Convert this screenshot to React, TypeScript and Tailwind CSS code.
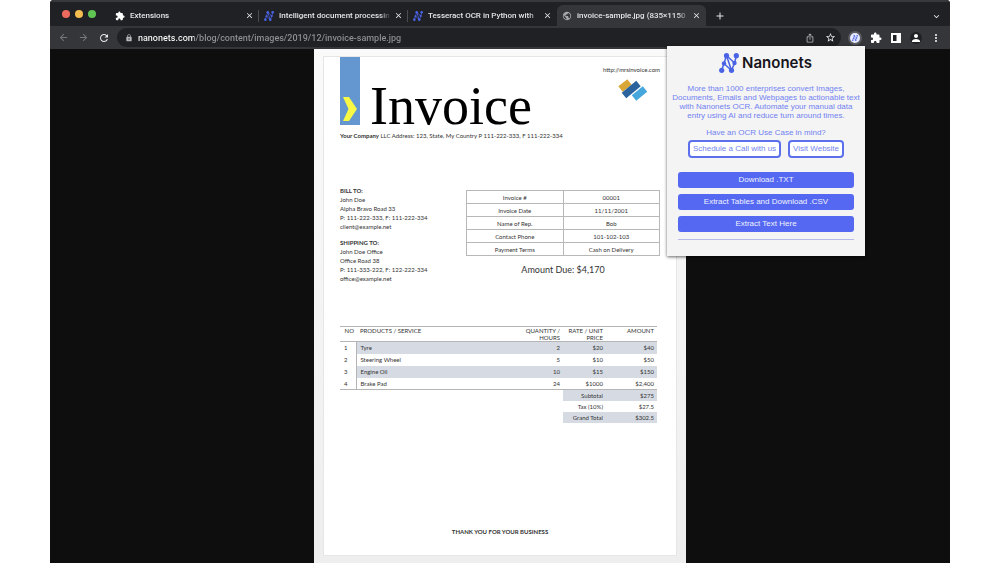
import React, { useState } from 'react';
import {
  MdAdd,
  MdArrowBack,
  MdArrowForward,
  MdClose,
  MdExpandMore,
  MdExtension,
  MdIosShare,
  MdLock,
  MdMoreVert,
  MdPerson,
  MdPublic,
  MdRefresh,
  MdStarBorder,
} from 'react-icons/md';

const NanonetsMark: React.FC<{ className?: string }> = ({ className }) => (
  <svg viewBox="0 0 20 20" className={className} aria-hidden="true">
    <g stroke="#4a63e6" strokeWidth="1.5" fill="none">
      <path d="M2.5 17.5 5 10.5 7.5 2.5 12.500 17.500 15.500 10 17.500 2.500" />
      <path d="M5 10.500 12.500 17.500M7.500 2.500 15.500 10" />
    </g>
    <g fill="#4a63e6">
      <circle cx="2.700" cy="17.300" r="2.600" />
      <circle cx="5" cy="10.500" r="2.200" />
      <circle cx="7.500" cy="2.700" r="2.600" />
      <circle cx="12.500" cy="17.300" r="2.600" />
      <circle cx="15.500" cy="10" r="2.200" />
      <circle cx="17.300" cy="2.700" r="2.600" />
    </g>
  </svg>
);

const tabs = [
  { title: 'Extensions', kind: 'extension' },
  { title: 'Intelligent document processin', kind: 'nanonets' },
  { title: 'Tesseract OCR in Python with', kind: 'nanonets' },
  { title: 'invoice-sample.jpg (835×1150', kind: 'image' },
];

const TabIcon: React.FC<{ kind: string }> = ({ kind }) => {
  if (kind === 'extension') return <MdExtension size={10} className="shrink-0 text-white" />;
  if (kind === 'image') return <MdPublic size={10} className="shrink-0 text-[#a5a7aa]" />;
  return <NanonetsMark className="size-[10px] shrink-0" />;
};

const TabStrip: React.FC<{ active: number; onSelect: (i: number) => void }> = ({ active, onSelect }) => (
  <div className="flex h-[26px] border-t-2 border-[#38393c] bg-[#202124] pl-3">
    <div className="flex w-12 shrink-0 items-center gap-[5px]">
      <span className="size-2 rounded-full bg-[#ec6a5e]" />
      <span className="size-2 rounded-full bg-[#f4bd4f]" />
      <span className="size-2 rounded-full bg-[#61c554]" />
    </div>
    <div className="flex min-w-0 pt-[3px]">
      {tabs.map((tab, i) => (
        <div
          key={tab.title}
          className={`flex w-[149px] min-w-0 items-center rounded-t-md px-[5px] ${
            i === active ? 'bg-[#35363a]' : ''
          }`}
        >
          <button onClick={() => onSelect(i)} className="flex min-w-0 flex-1 items-center gap-[5px]">
            <TabIcon kind={tab.kind} />
            <span className="min-w-0 flex-1 overflow-hidden mask-r-from-90% text-left font-['Roboto',sans-serif] text-[8px] leading-3 font-medium whitespace-nowrap text-[#e3e4e6]">
              {tab.title}
            </span>
          </button>
          <button aria-label={`Close ${tab.title}`} className="ml-[3px] text-[#e8eaed]">
            <MdClose size={9} />
          </button>
          {i < active - 1 && <span className="ml-1 -mr-[5px] h-3 w-px bg-[#4a4c50]" />}
        </div>
      ))}
    </div>
    <button aria-label="New tab" className="ml-2 pt-1 text-[#e8eaed]">
      <MdAdd size={12} />
    </button>
    <button aria-label="Search tabs" className="mr-2 ml-auto pt-1 text-[#e8eaed]">
      <MdExpandMore size={11} />
    </button>
  </div>
);

const Toolbar: React.FC = () => (
  <div className="flex h-[23px] items-center bg-[#35363a] px-2 text-[#e8eaed]">
    <div className="flex w-[59px] shrink-0 items-center gap-[9px]">
      <button aria-label="Back" className="text-[#75777b]">
        <MdArrowBack size={11} />
      </button>
      <button aria-label="Forward" className="text-[#75777b]">
        <MdArrowForward size={11} />
      </button>
      <button aria-label="Reload">
        <MdRefresh size={12} />
      </button>
    </div>
    <div className="flex h-[19px] min-w-0 flex-1 items-center rounded-full bg-[#202124] pr-[5px] pl-2">
      <MdLock size={8} className="mr-[5px] shrink-0 text-[#b5b7ba]" />
      <label htmlFor="address" className="sr-only">
        Address
      </label>
      <input
        id="address"
        type="text"
        defaultValue="nanonets.com/blog/content/images/2019/12/invoice-sample.jpg"
        className="min-w-0 flex-1 bg-[linear-gradient(90deg,#ffffff_56px,#8f9296_56px)] bg-clip-text font-['Roboto',sans-serif] text-[9px] leading-3 font-medium text-transparent outline-none"
      />
      <button aria-label="Share" className="mr-[10px] text-[#b5b7ba]">
        <MdIosShare size={10} />
      </button>
      <button aria-label="Bookmark">
        <MdStarBorder size={11} />
      </button>
    </div>
    <div className="ml-[7px] flex items-center gap-2">
      <button aria-label="Nanonets" className="flex size-[14px] items-center justify-center rounded-full bg-[#5a5b60]">
        <span className="flex size-[10px] items-center justify-center rounded-full bg-[#e8ebff]">
          <NanonetsMark className="size-[6px]" />
        </span>
      </button>
      <button aria-label="Extensions menu" className="text-white">
        <MdExtension size={12} />
      </button>
      <button aria-label="Side panel" className="px-px">
        <svg viewBox="0 0 10 10" className="size-[10px]" aria-hidden="true">
          <path d="M0 0h10v10H0z" fill="#fff" />
          <path d="M2 2h3.500v6H2z" fill="#202124" />
        </svg>
      </button>
      <button aria-label="Profile" className="rounded-full bg-[#202124] text-white">
        <MdPerson size={12} />
      </button>
      <button aria-label="More">
        <MdMoreVert size={12} />
      </button>
    </div>
  </div>
);

const outlineButton =
  'h-[18px] rounded-[4px] border-2 border-[#5b70ea] bg-white px-[3px] text-[8px] leading-[14px] whitespace-nowrap text-[#7484ee]';

const ExtensionPopup: React.FC = () => (
  <div className="absolute top-[46px] right-[85px] w-[198px] bg-[#f4f4f4] px-[11px] pt-[7px] pb-4 text-center font-['Liberation_Sans',sans-serif] text-[#7282f2] shadow-[0_1px_3px_rgba(0,0,0,0.6)]">
    <div className="flex h-5 items-center justify-center gap-[3px] pr-px">
      <NanonetsMark className="size-5" />
      <span className="font-['Inter',sans-serif] text-[15px] leading-5 font-semibold text-[#15151b]">Nanonets</span>
    </div>
    <p className="-mx-2 mt-[11px] text-[8px] leading-[9px]">
      More than 1000 enterprises convert Images,
      <br />
      Documents, Emails and Webpages to actionable text
      <br />
      with Nanonets OCR. Automate your manual data
      <br />
      entry using AI and reduce turn around times.
    </p>
    <p className="mt-2 text-[8px] leading-[9px]">Have an OCR Use Case in mind?</p>
    <div className="mt-[3px] flex justify-center gap-[7px]">
      <a href="#schedule" className={outlineButton}>
        Schedule a Call with us
      </a>
      <a href="#website" className={outlineButton}>
        Visit Website
      </a>
    </div>
    <div className="mt-[14px] flex flex-col gap-[6px]">
      {['Download .TXT', 'Extract Tables and Download .CSV', 'Extract Text Here'].map((label) => (
        <button key={label} className="h-4 rounded-[3px] bg-[#5468f2] text-[8px] leading-4 text-[#f0f2ff]">
          {label}
        </button>
      ))}
    </div>
    <hr className="mt-[7px] border-[#b4bbe8]" />
  </div>
);

const meta = [
  ['Invoice #', '00001'],
  ['Invoice Date', '11/11/2001'],
  ['Name of Rep.', 'Bob'],
  ['Contact Phone', '101-102-103'],
  ['Payment Terms', 'Cash on Delivery'],
];

const items = [
  ['1', 'Tyre', '2', '$20', '$40'],
  ['2', 'Steering Wheel', '5', '$10', '$50'],
  ['3', 'Engine Oil', '10', '$15', '$150'],
  ['4', 'Brake Pad', '24', '$1000', '$2,400'],
];

const totals = [
  ['Subtotal', '$275'],
  ['Tax (10%)', '$27.5'],
  ['Grand Total', '$302.5'],
];

const Invoice: React.FC = () => (
  <article className="flex flex-1 flex-col border border-[#e6e6e6] bg-white px-4 font-['Lato',sans-serif] text-[6px] leading-[9px] text-[#333333]">
    <header className="flex h-[68px]">
      <div className="flex w-5 shrink-0 items-end justify-center bg-[#6496cf] pb-1">
        <svg viewBox="0 0 14 24" className="h-6 w-[14px]" aria-hidden="true">
          <path d="M0 0h6l8 12-8 12H0l5.500-12z" fill="#f8f845" />
        </svg>
      </div>
      <h1 className="mt-[22px] ml-[10px] font-['Liberation_Serif',serif] text-[54px] leading-[54px] text-black">
        Invoice
      </h1>
      <div className="ml-auto flex flex-col items-end pt-2">
        <a href="#site">http://mrsinvoice.com</a>
        <svg viewBox="0 0 30 22" className="mt-[5px] mr-3 h-[22px] w-[30px]" aria-hidden="true">
          <g strokeWidth="7" strokeLinejoin="round">
            <path d="M2.500 10 11.500 3" stroke="#d9a738" />
            <path d="M6 16.500 20.500 4.500" stroke="#2b639f" />
            <path d="M16 19 27 10" stroke="#45a7dc" />
          </g>
        </svg>
      </div>
    </header>

    <p className="mt-[6px] whitespace-nowrap">
      <strong>Your Company</strong> LLC Address: 123, State, My Country P 111-222-333, F 111-222-334
    </p>

    <div className="mt-[46px] flex justify-between">
      <div className="flex flex-col gap-[7px]">
        <address className="not-italic">
          <strong>BILL TO:</strong>
          <br />
          John Doe
          <br />
          Alpha Bravo Road 33
          <br />
          P: 111-222-333, F: 111-222-334
          <br />
          client@example.net
        </address>
        <address className="not-italic">
          <strong>SHIPPING TO:</strong>
          <br />
          John Doe Office
          <br />
          Office Road 38
          <br />
          P: 111-333-222, F: 122-222-334
          <br />
          office@example.net
        </address>
      </div>
      <div className="w-[194px] pt-1 text-center">
        <table className="w-full table-fixed border-collapse">
          <tbody>
            {meta.map(([label, value]) => (
              <tr key={label} className="h-[13px]">
                <th className="border border-[#b8b8b8] p-0 font-normal">{label}</th>
                <td className="border border-[#b8b8b8] p-0">{value}</td>
              </tr>
            ))}
          </tbody>
        </table>
        <p className="mt-2 text-[9px] leading-3">Amount Due: $4,170</p>
      </div>
    </div>

    <table className="mt-[43px] mr-[3px] table-fixed border-collapse text-right leading-[7px]">
      <colgroup>
        <col className="w-4" />
        <col />
        <col className="w-[45px]" />
        <col className="w-[43px]" />
        <col className="w-[51px]" />
      </colgroup>
      <thead>
        <tr className="h-[15px] border-y border-[#b5b5b5] align-top">
          <th className="p-0 pr-[2px] font-normal">NO</th>
          <th className="p-0 pl-1 text-left font-normal">PRODUCTS / SERVICE</th>
          <th className="p-0 pr-[3px] font-normal">
            QUANTITY /<br />
            HOURS
          </th>
          <th className="p-0 pr-[3px] font-normal">
            RATE / UNIT
            <br />
            PRICE
          </th>
          <th className="p-0 pr-[3px] font-normal">AMOUNT</th>
        </tr>
      </thead>
      <tbody className="border-b border-[#b5b5b5]">
        {items.map(([no, name, qty, rate, amount], i) => {
          const fill = i % 2 === 0 ? 'bg-[#d6dbe3]' : '';
          return (
            <tr key={no} className="h-3">
              <td className="border-r border-[#b5b5b5] p-0 pr-2">{no}</td>
              <td className={`p-0 pl-1 text-left ${fill}`}>{name}</td>
              <td className={`p-0 pr-[3px] ${fill}`}>{qty}</td>
              <td className={`p-0 pr-[3px] ${fill}`}>{rate}</td>
              <td className={`p-0 pr-[3px] ${fill}`}>{amount}</td>
            </tr>
          );
        })}
      </tbody>
      <tfoot>
        {totals.map(([label, value], i) => {
          const fill = i % 2 === 0 ? 'bg-[#d6dbe3]' : '';
          return (
            <tr key={label} className="h-[11px]">
              <td colSpan={3} className="p-0" />
              <td className={`p-0 pr-[3px] ${fill}`}>{label}</td>
              <td className={`p-0 pr-[3px] ${fill}`}>{value}</td>
            </tr>
          );
        })}
      </tfoot>
    </table>

    <p className="mt-auto pb-[19px] text-center font-bold">THANK YOU FOR YOUR BUSINESS</p>
  </article>
);

const App: React.FC = () => {
  const [active, setActive] = useState(3);

  return (
    <div className="min-h-screen bg-white font-['Inter',sans-serif]">
      <div className="relative mx-auto flex min-h-screen w-[90%] flex-col overflow-hidden rounded-t-sm bg-[#0e0e0e]">
        <TabStrip active={active} onSelect={setActive} />
        <Toolbar />
        <main className="mx-auto flex w-full max-w-[372px] flex-1 flex-col bg-linear-to-b from-[#fafafa] to-[#eeeeee] px-[9px] py-[7px]">
          <Invoice />
        </main>
        <ExtensionPopup />
      </div>
    </div>
  );
};

export default App;
